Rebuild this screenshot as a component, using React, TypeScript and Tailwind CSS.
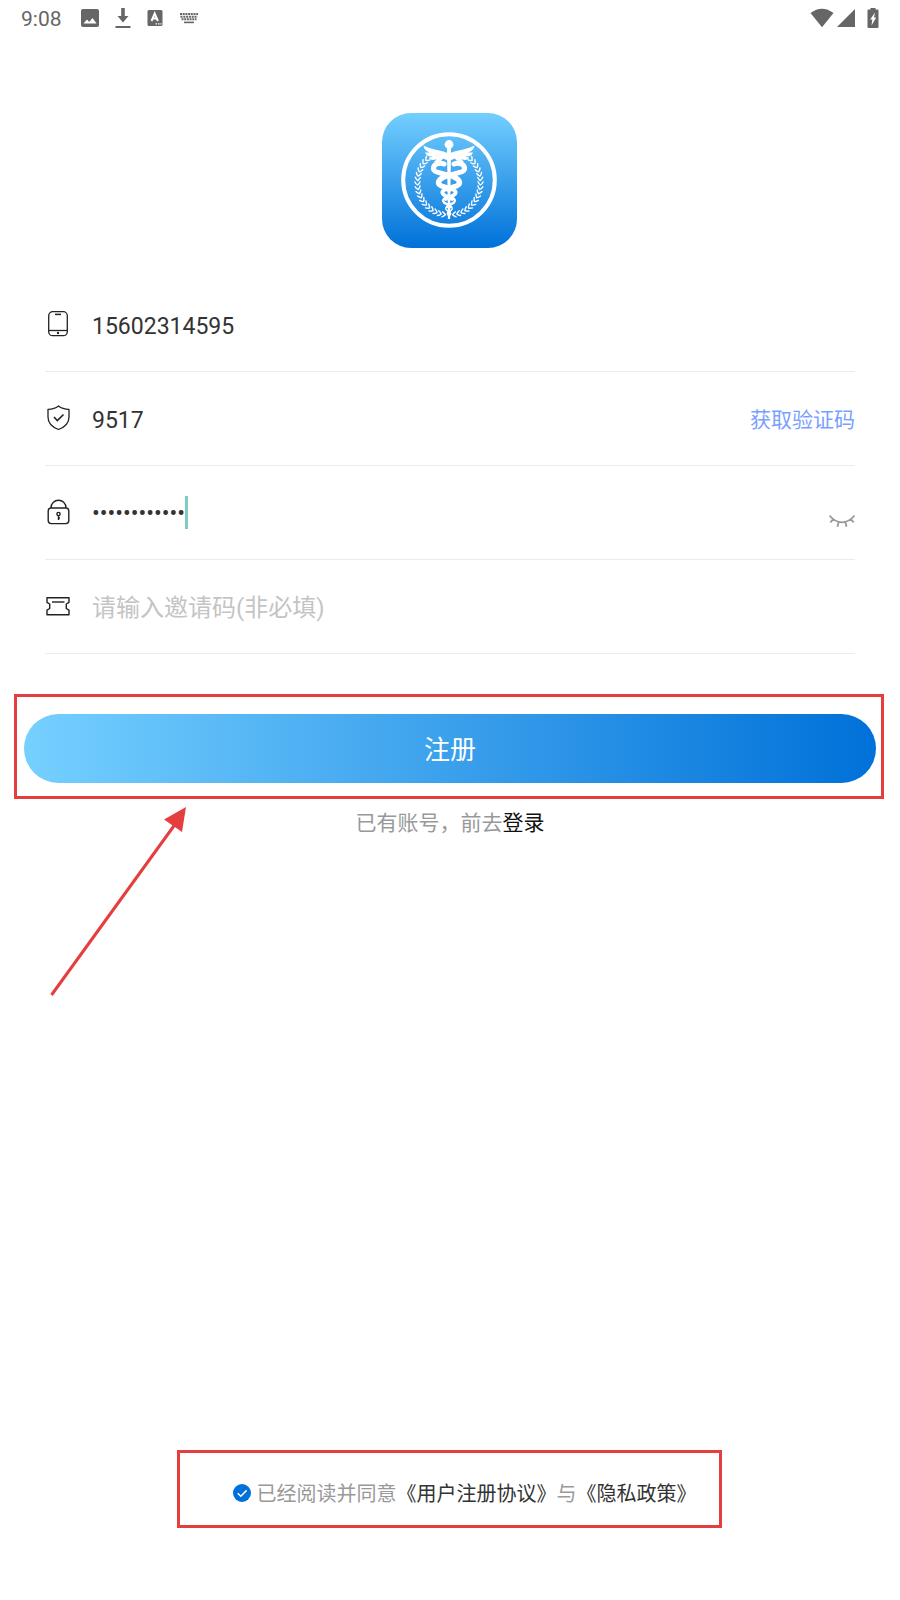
import React from 'react';

const laurel = Array.from({ length: 17 }, (_, i) => {
  const angle = ((8 + i * 7.9) * Math.PI) / 180;
  return {
    x: -31.5 * Math.sin(angle),
    y: 2.5 + 32.5 * Math.cos(angle),
    turn: 8 + i * 7.9,
  };
});

function LaurelBranch() {
  return (
    <g fill="none" stroke="#fff" strokeWidth="1.4" strokeLinecap="round">
      {laurel.map((leaf) => (
        <path
          key={leaf.turn}
          d="M-2.4 -2.5 Q-0.2 -1.6 0.8 0 Q-0.2 1.6 -2.4 2.5"
          transform={`translate(${leaf.x} ${leaf.y}) rotate(${leaf.turn})`}
        />
      ))}
    </g>
  );
}

function Snake() {
  return (
    <g fill="none" stroke="#fff" strokeLinecap="round">
      <path d="M-5 -16 C-10 -18 -16 -15.5 -15.5 -11 C-15 -7 -5 -7 1 -4" strokeWidth="5" />
      <path d="M-1 -5 C6 -3 10.5 -1 10.5 3 C10 7 4 6 -1 9" strokeWidth="5.4" />
      <path d="M1 8 C-5 9 -8 11.5 -6 14 C-4 16.5 0 17 3 19" strokeWidth="3.8" />
      <path d="M1 17 C6 18.5 7 20.5 5 22.5 C3 24 0 25 -2 27" strokeWidth="2.4" />
      <path d="M0 25 C-4 27 -4 29 -2 30.5 C1 32 3 33 1 35" strokeWidth="1.4" />
    </g>
  );
}

function Wing() {
  return (
    <g fill="#fff">
      <path d="M0 -26 C-5 -30 -15 -29 -25.5 -34.5 C-25 -30 -21.5 -28 -18.5 -27.8 C-22 -27.5 -23 -27.5 -24 -27.8 C-23 -24 -19 -23 -16.5 -23.5 C-18 -22.5 -19.5 -22.3 -20.5 -22.5 C-18.5 -19.5 -15 -19.5 -12.5 -21 C-13 -19.5 -14.5 -18.5 -15.5 -18.2 C-11 -17 -7 -19 -6 -21.5 L0 -19 Z" />
    </g>
  );
}

function Logo() {
  return (
    <svg viewBox="0 0 135 135" className="w-[135px] h-[135px]" role="img" aria-label="logo">
      <defs>
        <linearGradient id="logo-bg" x1="0" y1="0" x2="0" y2="1">
          <stop offset="0" stopColor="#74cfff" />
          <stop offset="1" stopColor="#0071d9" />
        </linearGradient>
      </defs>
      <rect width="135" height="135" rx="29" fill="url(#logo-bg)" />
      <g transform="translate(67 67)">
        <circle r="45.8" fill="none" stroke="#fff" strokeWidth="4" />
        <LaurelBranch />
        <g transform="scale(-1 1)">
          <LaurelBranch />
        </g>
        <Wing />
        <g transform="scale(-1 1)">
          <Wing />
        </g>
        <circle cy="-35.5" r="4.4" fill="#fff" />
        <path d="M-2 -32 H2 L1.1 39 H-1.1 Z" fill="#fff" />
        <Snake />
        <g transform="scale(-1 1)">
          <Snake />
        </g>
      </g>
    </svg>
  );
}

function StatusBar() {
  return (
    <header className="flex h-9 items-center justify-between px-[21px] text-[#666]">
      <div className="flex items-center">
        <span className="w-[60px] pt-0.5 text-[21px] leading-6">9:08</span>
        <svg viewBox="0 0 18 18" className="w-[18px] h-[18px] mr-4" fill="currentColor">
          <path fillRule="evenodd" d="M2 0 H16 Q18 0 18 2 V16 Q18 18 16 18 H2 Q0 18 0 16 V2 Q0 0 2 0 Z M2.5 14.5 H15.5 L11.5 9 L8.2 13 L6 10.5 Z" />
        </svg>
        <svg viewBox="0 0 16 22" className="w-4 h-[22px] mr-4" fill="currentColor">
          <path d="M6.2 1 H9.8 V9 H13.5 L8 15.5 L2.5 9 H6.2 Z M0.5 19 H15.5 V21 H0.5 Z" />
        </svg>
        <svg viewBox="0 0 16 18" className="w-4 h-[18px] mr-4">
          <rect x="0.5" y="1" width="15" height="16" rx="1.5" fill="currentColor" />
          <path d="M4.5 12 L7.7 4.5 L10.9 12 M5.7 9.6 H9.7" fill="none" stroke="#fff" strokeWidth="2" />
          <path d="M8.5 14.8 H10 M11 14.8 H12.5 M13.4 14.8 H14.6" stroke="#fff" strokeWidth="1.2" />
        </svg>
        <svg viewBox="0 0 20 12" className="w-5 h-3" fill="none" stroke="currentColor" strokeWidth="2">
          <path d="M1 2 H19" strokeDasharray="2 0.7" />
          <path d="M1.5 4.7 H18.5" strokeDasharray="2 0.8" />
          <path d="M2.5 7.3 H17.5" strokeDasharray="2 0.7" />
          <path d="M5 10.4 H15" strokeWidth="1.6" />
        </svg>
      </div>
      <div className="flex items-center">
        <svg viewBox="0 0 24 20" className="w-6 h-5 mr-[3px]" fill="currentColor">
          <path d="M0.5 5 Q12 -3.5 23.5 5 L12 19.2 Z" />
        </svg>
        <svg viewBox="0 0 18 18" className="w-[18px] h-[18px] mr-3" fill="currentColor">
          <path d="M18 0 V18 H0 Z" />
        </svg>
        <svg viewBox="0 0 12 20" className="w-3 h-5">
          <path d="M3.5 0 H8.5 V1.5 H10.5 Q11.5 1.5 11.5 2.5 V19 Q11.5 20 10.5 20 H1.5 Q0.5 20 0.5 19 V2.5 Q0.5 1.5 1.5 1.5 H3.5 Z" fill="currentColor" />
          <path d="M8 4.5 L3.2 11.5 H5.3 L4.5 17.5 L9.2 9.5 H7 Z" fill="#fff" />
        </svg>
      </div>
    </header>
  );
}

const iconClass = 'w-[26px] h-[28px] shrink-0';

function PhoneIcon() {
  return (
    <svg viewBox="0 0 26 28" className={iconClass} fill="none" stroke="#222" strokeWidth="1.3">
      <rect x="3.7" y="1.7" width="18.6" height="24" rx="4" />
      <path d="M3.7 20.5 H22.3" />
      <path d="M10 4.4 H16" strokeWidth="1.5" />
      <circle cx="13" cy="23" r="1.2" fill="#222" stroke="none" />
    </svg>
  );
}

function ShieldIcon() {
  return (
    <svg viewBox="0 0 26 28" className={iconClass} fill="none" stroke="#222" strokeWidth="1.3">
      <path d="M13.5 2 Q17.5 5.3 24 5.3 V13 Q24 21.5 13.5 25.5 Q3 21.5 3 13 V5.3 Q9.5 5.3 13.5 2 Z" strokeLinejoin="round" />
      <path d="M9 13 L12.3 16.5 L18.5 10.5" strokeWidth="1.6" />
    </svg>
  );
}

function LockIcon() {
  return (
    <svg viewBox="0 0 26 28" className={iconClass} fill="none" stroke="#222" strokeWidth="1.4">
      <rect x="3.2" y="10" width="20.6" height="15.6" rx="3" />
      <path d="M6 10 C6 -0.3 21 -0.3 21 10" />
      <circle cx="13.5" cy="16" r="1.6" />
      <path d="M13.5 17.5 V22 M13.5 20 H15" />
    </svg>
  );
}

function TicketIcon() {
  return (
    <svg viewBox="0 0 26 28" className={iconClass} fill="none" stroke="#222" strokeWidth="1.4">
      <path d="M2 5.7 H24 V10.3 L21.3 12 V16.5 L24 18.2 V22.7 H2 V18.2 L4.7 16.5 V12 L2 10.3 Z" strokeLinejoin="round" />
      <path d="M7 10 H19.5" />
    </svg>
  );
}

interface FieldProps {
  id: string;
  label: string;
  icon: React.ReactNode;
  children: React.ReactNode;
}

function Field({ id, label, icon, children }: FieldProps) {
  return (
    <div className="flex h-[94px] items-center border-b border-[#ebebeb]">
      <label htmlFor={id} aria-label={label} className="w-[47px] shrink-0 pb-0.5">
        {icon}
      </label>
      {children}
    </div>
  );
}

export default function App() {
  const [phone, setPhone] = React.useState('15602314595');
  const [code, setCode] = React.useState('9517');
  const [password, setPassword] = React.useState('abcd12345678');
  const [invite, setInvite] = React.useState('');
  const [agreed, setAgreed] = React.useState(true);

  return (
    <div className="flex min-h-screen flex-col bg-white font-[Roboto,'Noto_Sans_CJK_SC',sans-serif] text-[#333]">
      <StatusBar />
      <main className="flex flex-1 flex-col">
        <div className="flex justify-center pt-[77px] pb-[30px] pr-0.5">
          <Logo />
        </div>

        <form onSubmit={(e) => e.preventDefault()}>
          <div className="mx-[45px]">
            <Field id="phone" label="手机号" icon={<PhoneIcon />}>
              <input
                id="phone"
                type="tel"
                className="min-w-0 flex-1 pt-1 text-[23px] leading-8 outline-none"
                value={phone}
                onChange={(e) => setPhone(e.target.value)}
              />
            </Field>
            <Field id="code" label="验证码" icon={<ShieldIcon />}>
              <input
                id="code"
                type="text"
                className="min-w-0 flex-1 pt-1 text-[23px] leading-8 outline-none"
                value={code}
                onChange={(e) => setCode(e.target.value)}
              />
              <button type="button" className="pt-0.5 text-[21px] leading-8 text-[#7a9fff]">
                获取验证码
              </button>
            </Field>
            <Field id="password" label="密码" icon={<LockIcon />}>
              <div className="flex min-w-0 flex-1 items-center">
                <input
                  id="password"
                  type="password"
                  className="[field-sizing:content] pt-0.5 text-[23px] leading-8 outline-none"
                  value={password}
                  onChange={(e) => setPassword(e.target.value)}
                />
                <span className="h-[33px] w-[3px] bg-[#80cbc4]" />
              </div>
              <button type="button" aria-label="显示密码" className="pt-4">
                <svg viewBox="0 0 26 14" className="w-[26px] h-[14px]" fill="none" stroke="#999" strokeWidth="1.8">
                  <path d="M0.5 1.5 Q6 8.3 13 8.3 Q20 8.3 25.5 1.5 M4.5 5 L1.3 8.3 M9.5 8 L8.5 12.8 M16.5 8 L17.5 12.8 M21.5 5 L24.7 8.3" />
                </svg>
              </button>
            </Field>
            <Field id="invite" label="邀请码" icon={<TicketIcon />}>
              <input
                id="invite"
                type="text"
                placeholder="请输入邀请码(非必填)"
                className="min-w-0 flex-1 pt-0.5 text-2xl leading-8 outline-none placeholder:text-[#c4c4c4]"
                value={invite}
                onChange={(e) => setInvite(e.target.value)}
              />
            </Field>
          </div>

          <div className="ml-[14px] mr-4 mt-10 border-3 border-[#e53e3e] pt-[17px] pb-[13px] pl-[7px] pr-[5px]">
            <button
              type="submit"
              className="h-[69px] w-full rounded-full bg-linear-to-r/srgb from-[#76d0ff] to-[#0071d9] pt-1 text-[26px] text-white"
            >
              注册
            </button>
          </div>
        </form>

        <div className="relative">
          <p className="pt-2 text-center text-[21px] leading-8 text-[#999]">
            已有账号，前去
            <a href="#login" className="text-[#111]">
              登录
            </a>
          </p>
          <svg viewBox="0 0 140 192" className="absolute left-12 top-2 w-[140px] h-[192px]">
            <path d="M3.5 188 L128 16" stroke="#e53e3e" strokeWidth="3" />
            <path d="M138 0 L116 12.5 L134 25 Z" fill="#e53e3e" />
          </svg>
        </div>
      </main>

      <footer className="mb-[72px] flex justify-center pr-0.5">
        <div className="flex h-[78px] items-center border-3 border-[#e53e3e] pl-[53px] pr-[22px] pt-2 text-xl leading-8 text-[#999]">
          <input
            id="agree"
            type="checkbox"
            className="peer sr-only"
            checked={agreed}
            onChange={(e) => setAgreed(e.target.checked)}
          />
          <label htmlFor="agree" className="flex items-center gap-1.5">
            <svg viewBox="0 0 18 18" className="w-[18px] h-[18px]">
              <circle cx="9" cy="9" r="9" fill={agreed ? '#0071d9' : '#ccc'} />
              <path d="M4.7 9.2 L7.8 12.2 L13.6 6.4" fill="none" stroke="#fff" strokeWidth="1.5" />
            </svg>
            <span className="pt-0.5">已经阅读并同意</span>
          </label>
          <a href="#terms" className="pt-0.5 text-[#333]">《用户注册协议》</a>
          <span className="pt-0.5">与</span>
          <a href="#privacy" className="pt-0.5 text-[#333]">《隐私政策》</a>
        </div>
      </footer>
    </div>
  );
}
